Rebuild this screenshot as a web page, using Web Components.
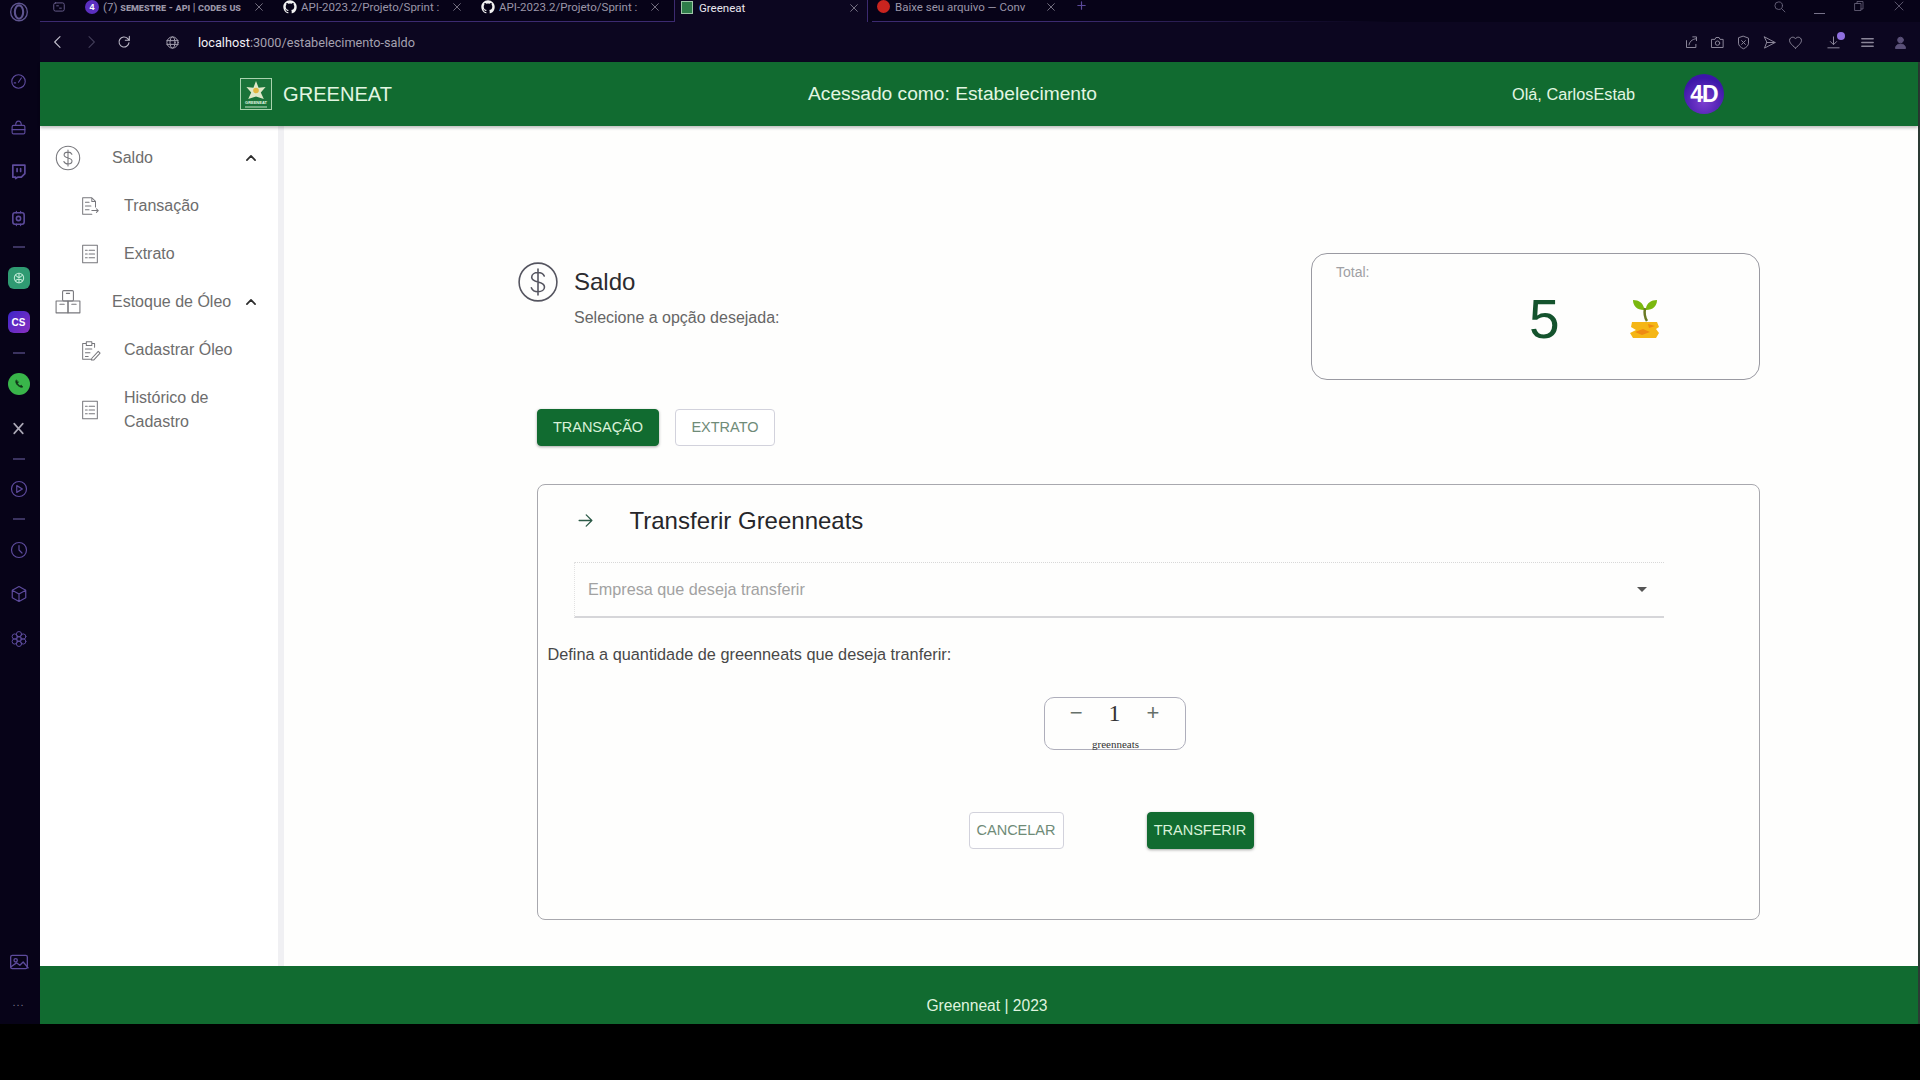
<!DOCTYPE html>
<html lang="pt-BR">
<head>
<meta charset="utf-8">
<title>Greeneat</title>
<style>
  html, body { margin: 0; height: 1080px; overflow: hidden; background: #000; font-family: "Liberation Sans", Arial, sans-serif; }
  browser-frame { height: 1024px; }
</style>
</head>
<body>
<browser-frame>
  <page-main>
    <side-nav slot="nav"></side-nav>
    <saldo-page></saldo-page>
  </page-main>
</browser-frame>

<script>
const GITHUB = 'M12 .5C5.65.5.5 5.65.5 12c0 5.08 3.29 9.39 7.86 10.91.58.11.79-.25.79-.56v-1.96c-3.2.7-3.87-1.54-3.87-1.54-.52-1.33-1.28-1.68-1.28-1.68-1.04-.71.08-.7.08-.7 1.15.08 1.76 1.18 1.76 1.18 1.03 1.76 2.69 1.25 3.35.96.1-.74.4-1.25.73-1.54-2.55-.29-5.24-1.28-5.24-5.69 0-1.26.45-2.28 1.18-3.09-.12-.29-.51-1.46.11-3.05 0 0 .96-.31 3.16 1.18a11 11 0 0 1 5.76 0c2.2-1.49 3.16-1.18 3.16-1.18.62 1.59.24 2.76.12 3.05.74.81 1.18 1.83 1.18 3.09 0 4.42-2.69 5.39-5.25 5.68.41.36.78 1.06.78 2.13v3.16c0 .31.21.67.79.56A11.5 11.5 0 0 0 23.5 12C23.5 5.65 18.35.5 12 .5z';

// all icons sit on a 24x24 box, stroke is currentColor
const ICONS = {
  dollar: '<circle cx="12" cy="12" r="10.8"/><path d="M15.6 8.6c-.6-1.3-2-2-3.6-2-2 0-3.6 1-3.6 2.7 0 3.6 7.3 1.8 7.3 5.5 0 1.7-1.6 2.8-3.7 2.8-1.8 0-3.2-.8-3.8-2.3M12 4.6v14.8"/>',
  chevron: '<path d="M5 15.5l7-7 7 7" stroke-width="3"/>',
  receipt: '<path d="M14 21H4V3h10l4 4v6M14 3v4h4M7 8h4M7 12h6M7 16h4M14 17h7M19 15l2 2-2 2"/>',
  list: '<rect x="4" y="2.5" width="16" height="19"/><path d="M7 8h2M11 8h6M7 12h2M11 12h6M7 16h2M11 16h6"/>',
  boxes: '<rect x="7" y="1.5" width="10" height="9.5" rx="1"/><rect x="1" y="11" width="11" height="11"/><rect x="12" y="11" width="11" height="11"/><path d="M10.5 4h3M4.5 14h4M15.5 14h4"/>',
  clipboard: '<path d="M17 9V5h-3M8 5H4v17h9M8 3h6v4H8zM7 11h7M7 15h5M7 19h3M14 21l7-7.5 2 2-7 7.5h-2.500z"/>',
  arrow: '<path d="M3 12h18M13 4l8 8-8 8"/>',
  back: '<path d="M15 4l-8 8 8 8"/>',
  forward: '<path d="M9 4l8 8-8 8"/>',
  reload: '<path d="M19.500 13a7.500 7.500 0 1 1-2.200-6.300L20 9.500M20 3.500v6h-6"/>',
  globe: '<circle cx="12" cy="12" r="9"/><ellipse cx="12" cy="12" rx="4" ry="9"/><path d="M3 9h18M3 15h18"/>',
  share: '<path d="M4 9v11h15v-5M8 16c.5-5 4.500-9 11-10M14 3h6v6"/>',
  camera: '<path d="M3 7h5l1.500-3h5L16 7h5v13H3z"/><circle cx="12" cy="13" r="3.500"/>',
  shield: '<path d="M12 2l8 3v8c0 4-3.500 7-8 9-4.500-2-8-5-8-9V5zM9 9l6 6M15 9l-6 6"/>',
  send: '<path d="M4 3l17 9-17 9 3.500-9zM7.500 12H21"/>',
  heart: '<path d="M12 21C5 15 2.500 12 2.500 8.500 2.500 5.500 5 3.500 7.500 3.500c2 0 3.500 1 4.500 2.500 1-1.500 2.500-2.500 4.500-2.500 2.500 0 5 2 5 5C21.500 12 19 15 12 21z"/>',
  download: '<path d="M12 3v12M7 10.500l5 5 5-5M3 20.500h18"/>',
  menu: '<path d="M3 6h18M3 12h18M3 18h18" stroke-width="2.600"/>',
  user: '<circle cx="12" cy="8" r="4.500" fill="currentColor"/><path d="M4 21c0-4 3.500-6.500 8-6.500s8 2.500 8 6.500z" fill="currentColor"/>',
  search: '<circle cx="10.500" cy="10.500" r="7"/><path d="M16 16l6 6"/>',
  restore: '<path d="M8 7V3h12v15h-4M4 7h12v14H4z"/>',
  close: '<path d="M4 4l16 16M20 4L4 20"/>',
  plus: '<path d="M12 4v16M4 12h16" stroke-width="2.600"/>',
  workspace: '<rect x="3" y="5" width="18" height="14" rx="3"/><path d="M8 10h3M13 14h3"/>',
  opera: '<ellipse cx="12" cy="12" rx="10" ry="10.500"/><ellipse cx="12" cy="12" rx="5" ry="8" stroke-width="2.500"/>',
  gauge: '<circle cx="12" cy="12" r="9.500"/><path d="M12 13l4-6M6 14h2"/>',
  bag: '<rect x="3" y="9" width="18" height="12" rx="2"/><path d="M8 9c0-3 1.500-6 4-6s4 3 4 6M3 15h18"/>',
  twitch: '<path d="M4 3h17v12l-5 5h-5l-3 2v-2H4z" stroke-width="2.400"/><path d="M10 8v4M15 8v4" stroke-width="2.400"/>',
  square: '<rect x="4" y="4" width="16" height="16" rx="3" stroke-width="2.200"/><circle cx="12" cy="12" r="3" stroke-width="2.200"/><path d="M9 2v2M15 2v2M9 20v2M15 20v2"/>',
  playcircle: '<circle cx="12" cy="12" r="10"/><path d="M9 7.500l7.500 4.500L9 16.500z"/>',
  clock: '<circle cx="12" cy="12" r="10"/><path d="M12 6v6l4 4"/>',
  cube: '<path d="M12 2l9 5v10l-9 5-9-5V7zM3 7l9 5 9-5M12 12v10"/>',
  gear: '<circle cx="12" cy="12" r="3"/><circle cx="12" cy="5.500" r="3.500"/><circle cx="12" cy="18.500" r="3.500"/><circle cx="6.300" cy="8.700" r="3.500"/><circle cx="17.700" cy="8.700" r="3.500"/><circle cx="6.300" cy="15.300" r="3.500"/><circle cx="17.700" cy="15.300" r="3.500"/>',
  image: '<rect x="2" y="4" width="20" height="16" rx="2"/><circle cx="8" cy="10" r="2"/><path d="M2 18l7-5 4 3 4-4 6 7"/>',
  x: '<path d="M4 3l16 18M20 3L4 21" stroke-width="3"/>',
  whatsapp: '<path d="M8 7c-1 2 0 5 2.500 7s5 3 6.500 2l-2-2.500-1.500 1c-1.500-.5-3-2-3.500-3.500l1-1.500z" fill="currentColor"/>',
  knot: '<circle cx="12" cy="12" r="7"/><path d="M7 8l10 8M17 8L7 16M12 5v14"/>',
  github: `<path d="${GITHUB}" fill="currentColor" stroke="none"/>`
};

class UiIcon extends HTMLElement {
  connectedCallback() {
    const size = this.getAttribute('size') || 24;
    const stroke = this.getAttribute('stroke') || 1.6;
    this.attachShadow({ mode: 'open' });
    this.shadowRoot.innerHTML = `
      <style>
        :host { display: inline-flex; flex: none; width: ${size}px; height: ${size}px; }
        svg { width: 100%; height: 100%; display: block; overflow: visible; }
      </style>
      <svg viewBox="0 0 24 24" fill="none" stroke="currentColor" stroke-width="${stroke}"
           stroke-linecap="round" stroke-linejoin="round">${ICONS[this.getAttribute('name')] || ''}</svg>`;
  }
}

class BrowserTab extends HTMLElement {
  connectedCallback() {
    this.attachShadow({ mode: 'open' });
    this.shadowRoot.innerHTML = `
      <style>
        :host {
          display: flex;
          align-items: center;
          box-sizing: border-box;
          width: 198px;
          height: 22px;
          padding: 0 14px 7px 5px;
          color: #9b96a8;
          font: 11.5px Roboto, "Liberation Sans", sans-serif;
          border-bottom: 1px solid #3c2a70;
        }
        :host([active]) {
          width: 194px;
          padding: 0 8px 7px 6px;
          color: #e9e6ef;
          background: #0c0620;
          border-left: 1px solid #3c2a70;
          border-right: 1px solid #3c2a70;
          border-bottom: 0;
        }
        .icon { width: 14px; height: 14px; flex: none; display: flex; margin-right: 4px; }
        .text { flex: 1; min-width: 0; white-space: nowrap; overflow: hidden; }
        ui-icon { color: #a9a5b3; margin-left: 6px; }
      </style>
      <span class="icon"><slot name="icon"></slot></span>
      <span class="text"><slot></slot></span>
      <ui-icon name="close" size="10"></ui-icon>`;
  }
}

class BrowserFrame extends HTMLElement {
  connectedCallback() {
    this.attachShadow({ mode: 'open' });
    this.shadowRoot.innerHTML = `
      <style>
        :host { display: flex; flex-direction: column; background: #070318; color: #5d4b9c; }
        .tabs { display: flex; height: 22px; flex: none; }
        .orb { width: 40px; display: flex; justify-content: center; color: #5f5590; padding-right: 3px; box-sizing: border-box; }
        .orb ui-icon { margin-top: 2px; }
        .space { width: 40px; display: flex; justify-content: center; color: #6a6190; border-bottom: 1px solid #3c2a70; box-sizing: border-box; padding-right: 2px; }
        .fill { flex: 1; display: flex; align-items: flex-start; color: #86809a; box-sizing: border-box; position: relative; }
        .fill::after {
          content: ''; position: absolute; left: 0; bottom: 0; width: 320px; height: 1px;
          background: linear-gradient(90deg, #3c2a70, transparent);
        }
        .plus { margin: 0 0 0 6px; color: #5b4a9a; }
        .win { margin-left: auto; display: flex; align-items: flex-start; gap: 28px; padding-right: 15px; color: #6d6880; }
        .dash { width: 11px; height: 1px; background: #77728a; margin-top: 13px; }
        .body { flex: 1; display: flex; min-height: 0; }
        .rail { width: 40px; flex: none; position: relative; display: flex; flex-direction: column; align-items: center; padding: 51px 3px 0 0; box-sizing: border-box; }
        .rail > * { flex: none; }
        .sep { width: 12px; height: 2px; background: #3b3360; }
        .app { width: 22px; height: 22px; border-radius: 6px; display: flex; align-items: center; justify-content: center; box-sizing: border-box; }
        .gpt { background: #2f9a72; color: #bce8d4; }
        .cs { background: linear-gradient(135deg, #3b27c9, #8b2fc0); color: #fff; font: bold 10px "Liberation Sans", sans-serif; }
        .wa { background: #39b54a; color: #12351a; border-radius: 50%; }
        .right { flex: 1; min-width: 0; display: flex; flex-direction: column; }
        .bar {
          height: 40px; flex: none; background: #0c0620; display: flex; align-items: center; color: #8a8598;
          font: 12.7px Roboto, "Liberation Sans", sans-serif;
        }
        .bar b { font-weight: 400; color: #f3f1f7; }
        .bar span { color: #a5a1b0; margin-left: 18px; }
        .tool { margin-left: auto; display: flex; align-items: center; padding-right: 12px; position: relative; }
        .dot { position: absolute; left: 153px; top: -3px; width: 8px; height: 8px; border-radius: 50%; background: #8f6fe0; }
      </style>
      <div class="tabs">
        <div class="orb"><ui-icon name="opera" size="20"></ui-icon></div>
        <div class="space"><ui-icon name="workspace" size="14"></ui-icon></div>
        <browser-tab>
          <span slot="icon" style="width:14px;height:14px;border-radius:50%;background:#5b2fc0;color:#fff;font:bold 9px/14px 'Liberation Sans',sans-serif;text-align:center">4</span>
          (7) <span style="font-variant:small-caps;font-weight:700;font-size:10.5px">semestre - api | codes us</span>
        </browser-tab>
        <browser-tab><ui-icon slot="icon" name="github" size="14" style="color:#f2f2f2"></ui-icon>API-2023.2/Projeto/Sprint :</browser-tab>
        <browser-tab><ui-icon slot="icon" name="github" size="14" style="color:#f2f2f2"></ui-icon>API-2023.2/Projeto/Sprint :</browser-tab>
        <browser-tab active><span slot="icon" style="width:12px;height:13px;background:#2f7d4a;border:1px solid #9fc7a8;box-sizing:border-box"></span>Greeneat</browser-tab>
        <browser-tab style="margin-left:4px">
          <span slot="icon" style="width:13px;height:13px;border-radius:50%;background:#c9241f;margin-right:-1px"></span>
          Baixe seu arquivo — Conv
        </browser-tab>
        <div class="fill">
          <ui-icon class="plus" name="plus" size="11"></ui-icon>
          <div class="win">
            <ui-icon name="search" size="13"></ui-icon>
            <span class="dash"></span>
            <ui-icon name="restore" size="12"></ui-icon>
            <ui-icon name="close" size="12"></ui-icon>
          </div>
        </div>
      </div>
      <div class="body">
        <div class="rail">
          <ui-icon name="gauge" size="17"></ui-icon>
          <ui-icon name="bag" size="17" style="margin-top:29px"></ui-icon>
          <ui-icon name="twitch" size="17" style="margin-top:27px"></ui-icon>
          <ui-icon name="square" size="17" style="margin-top:30px"></ui-icon>
          <span class="sep" style="margin-top:19px"></span>
          <span class="app gpt" style="margin-top:19px"><ui-icon name="knot" size="16"></ui-icon></span>
          <span class="app cs" style="margin-top:22px">CS</span>
          <span class="sep" style="margin-top:19px"></span>
          <span class="app wa" style="margin-top:19px"><ui-icon name="whatsapp" size="18" stroke="1"></ui-icon></span>
          <ui-icon name="x" size="13" style="margin-top:27px;color:#aaa7b5"></ui-icon>
          <span class="sep" style="margin-top:23px"></span>
          <ui-icon name="playcircle" size="18" style="margin-top:20px"></ui-icon>
          <span class="sep" style="margin-top:20px"></span>
          <ui-icon name="clock" size="18" style="margin-top:21px"></ui-icon>
          <ui-icon name="cube" size="18" style="margin-top:26px"></ui-icon>
          <ui-icon name="gear" size="18" stroke="1.300" style="margin-top:27px"></ui-icon>
          <ui-icon name="image" size="20" style="margin-top:auto"></ui-icon>
          <span style="margin:26px 0 18px;color:#77728a;font-size:11px;line-height:8px;letter-spacing:1px">...</span>
        </div>
        <div class="right">
          <div class="bar">
            <ui-icon name="back" size="16" style="margin-left:10px;color:#c5c2cf"></ui-icon>
            <ui-icon name="forward" size="16" style="margin-left:17px;color:#423d58"></ui-icon>
            <ui-icon name="reload" size="16" style="margin-left:17px;color:#bdbac8"></ui-icon>
            <ui-icon name="globe" size="15" style="margin-left:33px;color:#a5a1b0"></ui-icon>
            <span><b>localhost</b>:3000/estabelecimento-saldo</span>
            <div class="tool">
              <ui-icon name="share" size="15" style="margin-right:11px"></ui-icon>
              <ui-icon name="camera" size="15" style="margin-right:11px"></ui-icon>
              <ui-icon name="shield" size="15" style="margin-right:11px"></ui-icon>
              <ui-icon name="send" size="15" style="margin-right:11px"></ui-icon>
              <ui-icon name="heart" size="15" style="margin-right:23px"></ui-icon>
              <ui-icon name="download" size="15" style="margin-right:19px"></ui-icon>
              <ui-icon name="menu" size="15" style="margin-right:18px"></ui-icon>
              <ui-icon name="user" size="15" style="color:#5a5078"></ui-icon>
              <i class="dot"></i>
            </div>
          </div>
          <slot></slot>
        </div>
      </div>`;
  }
}

class PageMain extends HTMLElement {
  connectedCallback() {
    this.attachShadow({ mode: 'open' });
    this.shadowRoot.innerHTML = `
      <style>
        :host { display: flex; flex-direction: column; flex: 1; min-height: 0; color: #333; height: 962px; }
        .frame { height: 100%; display: flex; flex-direction: column; border-right: 2px solid #2c3a34; }
        .middle { flex: 1; display: flex; min-height: 0; background: #fefefd; }
      </style>
      <div class="frame">
        <app-header></app-header>
        <div class="middle">
          <slot name="nav"></slot>
          <slot></slot>
        </div>
        <app-footer></app-footer>
      </div>`;
  }
}

class AppHeader extends HTMLElement {
  connectedCallback() {
    this.attachShadow({ mode: 'open' });
    this.shadowRoot.innerHTML = `
      <style>
        :host {
          display: grid;
          grid-template-columns: 768px 704px 172px 40px;
          align-items: center;
          flex: none;
          height: 64px;
          background: #116b30;
          color: #e2f6e2;
          box-shadow: 0 2px 3px rgba(0,0,0,.25);
          position: relative;
        }
        .brand { display: flex; align-items: center; padding-left: 200px; gap: 11px; font-size: 20.1px; }
        svg { width: 32px; height: 32px; display: block; }
        .who { font-size: 19.2px; }
        .user { font-size: 16.3px; }
        .avatar {
          width: 40px; height: 40px; border-radius: 50%;
          background: radial-gradient(circle at 50% 70%, #7d3fd0, #3c16a8 70%);
          color: #fff; font: bold 23px/40px "Liberation Sans", sans-serif; text-align: center;
          letter-spacing: -1px;
        }
      </style>
      <div class="brand">
        <svg viewBox="0 0 32 32">
          <rect x=".5" y=".5" width="31" height="31" fill="#1a7339" stroke="#a9d3ae"/>
          <path d="M16 3l2.600 6.800 7-.8-4.800 5.500 3 6.500-7.800-2.400-7.800 2.400 3-6.500L6.400 9l7 .8z" fill="#dfe8c8"/>
          <circle cx="16" cy="12.500" r="2.800" fill="#e2b73f"/>
          <text x="16" y="26" font-size="4" font-weight="700" text-anchor="middle" fill="#e2f6e2" font-family="Liberation Sans, sans-serif">GREENEAT</text>
          <path d="M5 29h22" stroke="#c5e3c8" stroke-width="1"/>
        </svg>
        <span>GREENEAT</span>
      </div>
      <div class="who">Acessado como: Estabelecimento</div>
      <div class="user">Olá, CarlosEstab</div>
      <div class="avatar">4D</div>`;
  }
}

class NavItem extends HTMLElement {
  connectedCallback() {
    const sub = this.hasAttribute('sub');
    this.attachShadow({ mode: 'open' });
    this.shadowRoot.innerHTML = `
      <style>
        :host {
          display: flex;
          align-items: center;
          box-sizing: border-box;
          min-height: 48px;
          padding-left: ${sub ? 39 : 15}px;
          color: #6d6d6d;
          font-size: 16px;
          line-height: 24px;
        }
        .ic { width: ${sub ? 45 : 57}px; flex: none; display: flex; color: #77777c; }
        .label { flex: 1; }
        .chev { color: #2d2d2d; margin-right: 20px; margin-left: -6px; }
      </style>
      <span class="ic"><ui-icon name="${this.getAttribute('icon')}" size="${sub ? 22 : 26}" stroke="${sub ? 1.100 : 1}"></ui-icon></span>
      <span class="label"><slot></slot></span>
      ${sub ? '' : '<ui-icon class="chev" name="chevron" size="14"></ui-icon>'}`;
  }
}

class SideNav extends HTMLElement {
  connectedCallback() {
    this.attachShadow({ mode: 'open' });
    this.shadowRoot.innerHTML = `
      <style>
        :host {
          display: block;
          flex: none;
          box-sizing: content-box;
          width: 238px;
          padding-top: 8px;
          background: #fff;
          border-right: 6px solid #f0f0f3;
        }
      </style>
      <nav-item icon="dollar">Saldo</nav-item>
      <nav-item sub icon="receipt">Transação</nav-item>
      <nav-item sub icon="list">Extrato</nav-item>
      <nav-item icon="boxes">Estoque de Óleo</nav-item>
      <nav-item sub icon="clipboard">Cadastrar Óleo</nav-item>
      <nav-item sub icon="list" style="min-height:72px">Histórico de<br>Cadastro</nav-item>`;
  }
}

class AppButton extends HTMLElement {
  connectedCallback() {
    this.attachShadow({ mode: 'open' });
    this.shadowRoot.innerHTML = `
      <style>
        :host {
          display: inline-flex;
          align-items: center;
          justify-content: center;
          box-sizing: border-box;
          height: 37px;
          padding-bottom: 1px;
          border-radius: 4px;
          font-size: 14.5px;
          color: #6f8b78;
          border: 1px solid #d2d2dc;
          background: #fff;
        }
        :host([primary]) {
          color: #d9f2d9;
          background: #116b30;
          border-color: #116b30;
          box-shadow: 0 1px 3px rgba(0,0,0,.35);
        }
      </style>
      <slot></slot>`;
  }
}

class TotalCard extends HTMLElement {
  connectedCallback() {
    this.attachShadow({ mode: 'open' });
    this.shadowRoot.innerHTML = `
      <style>
        :host {
          display: block;
          box-sizing: border-box;
          width: 449px;
          height: 127px;
          border: 1.500px solid #9a9aa2;
          border-radius: 16px;
          padding: 9.500px 0 0 24px;
        }
        .label { color: #a0a0a4; font-size: 14px; line-height: 16px; }
        .row { display: flex; align-items: center; margin: 8px 0 0 193px; }
        .num { font-size: 55px; line-height: 62px; color: #14532d; }
        svg { width: 32px; height: 40px; margin-left: 69px; display: block; }
      </style>
      <div class="label">Total:</div>
      <div class="row">
        <span class="num">${this.getAttribute('value')}</span>
        <svg viewBox="0 0 32 40">
          <path d="M15 9c-1-5-5-8-11-8 0 6 4 10 11 10zM17 9c1-5 5-8 11-8 0 6-4 10-11 10z" fill="#7ab80e"/>
          <path d="M16 9c-1 6 0 10 2 13" stroke="#6b7a24" stroke-width="2.500" fill="none"/>
          <path d="M3 23h25l2 5-3 2 3 4-3 5H4l-3-5 6-3-5-3z" fill="#f5b616"/>
          <path d="M6 33l8-3 7 3-8 3zM19 25l7 2-6 2z" fill="#ef8a12"/>
        </svg>
      </div>`;
  }
}

class QtyStepper extends HTMLElement {
  connectedCallback() {
    this.attachShadow({ mode: 'open' });
    this.shadowRoot.innerHTML = `
      <style>
        :host {
          display: block;
          box-sizing: border-box;
          width: 142px;
          height: 53px;
          border: 1.500px solid #aeaebb;
          border-radius: 10px;
          font-family: "Liberation Serif", serif;
          text-align: center;
        }
        .row { display: grid; grid-template-columns: 63px 14px 63px; align-items: center; height: 31px; color: #555; }
        .row span:first-child { text-align: right; padding-right: 25px; }
        .row span:last-child { text-align: left; padding-left: 25px; }
        .row span { font: 22px/30px "Liberation Sans", sans-serif; color: #66706a; }
        .row .val { font: 24px/30px "Liberation Serif", serif; color: #333; }
        .unit { font-size: 11px; line-height: 11px; margin-top: 10px; padding-left: 2px; color: #333; }
      </style>
      <div class="row"><span>−</span><span class="val">1</span><span>+</span></div>
      <div class="unit">greenneats</div>`;
  }
}

class SelectBox extends HTMLElement {
  connectedCallback() {
    this.attachShadow({ mode: 'open' });
    this.shadowRoot.innerHTML = `
      <style>
        :host {
          display: flex;
          align-items: center;
          box-sizing: border-box;
          width: 1090px;
          height: 56px;
          padding: 0 17px 0 13.500px;
          color: #a2a2a2;
          font-size: 16.2px;
          border-top: 1px dotted #d8d8d8;
          border-left: 1px dotted #e2e2e2;
          border-bottom: 2px solid #d6d6d9;
        }
        .text { flex: 1; }
        .caret { width: 0; height: 0; border: 5px solid transparent; border-top: 5px solid #555; border-bottom: 0; }
      </style>
      <span class="text"><slot></slot></span>
      <span class="caret"></span>`;
  }
}

class TransferCard extends HTMLElement {
  connectedCallback() {
    this.attachShadow({ mode: 'open' });
    this.shadowRoot.innerHTML = `
      <style>
        :host {
          display: block;
          box-sizing: border-box;
          height: 436px;
          border: 1.500px solid #a8a8ae;
          border-radius: 8px;
          padding: 17.500px 8.500px 0;
        }
        .head { display: flex; align-items: center; height: 36px; padding-left: 30px; font-size: 24px; color: #26262a; }
        ui-icon { color: #2c5a47; margin-right: 36px; }
        select-box { margin: 23px 0 0 27px; }
        .label { margin: 26px 0 0 1px; font-size: 16.3px; line-height: 20px; color: #484848; }
        qty-stepper { margin: 33px 0 0 497px; }
        .actions { display: flex; gap: 83px; margin: 62px 0 0 422px; }
        .cancel { width: 95px; }
        .go { width: 107px; }
      </style>
      <div class="head"><ui-icon name="arrow" size="17" stroke="1.800"></ui-icon>Transferir Greenneats</div>
      <select-box>Empresa que deseja transferir</select-box>
      <div class="label">Defina a quantidade de greenneats que deseja tranferir:</div>
      <qty-stepper></qty-stepper>
      <div class="actions">
        <app-button class="cancel">CANCELAR</app-button>
        <app-button class="go" primary>TRANSFERIR</app-button>
      </div>`;
  }
}

class SaldoPage extends HTMLElement {
  connectedCallback() {
    this.attachShadow({ mode: 'open' });
    this.shadowRoot.innerHTML = `
      <style>
        :host { display: block; flex: 1; min-width: 0; box-sizing: border-box; padding: 127px 158px 0 253px; }
        .top { display: flex; justify-content: space-between; align-items: flex-start; }
        .title { display: flex; gap: 15px; margin: 8px 0 0 -20px; color: #555560; }
        .title h1 { margin: 6px 0 0; font-weight: 400; font-size: 24px; line-height: 30px; color: #2b2b2f; }
        .title p { margin: 11px 0 0; font-size: 16px; line-height: 20px; color: #666; }
        .tabs { display: flex; gap: 16px; margin: 29px 0 38px; }
        .t1 { width: 122px; }
        .t2 { width: 100px; }
      </style>
      <div class="top">
        <div class="title">
          <ui-icon name="dollar" size="42" stroke=".9"></ui-icon>
          <div>
            <h1>Saldo</h1>
            <p>Selecione a opção desejada:</p>
          </div>
        </div>
        <total-card value="5"></total-card>
      </div>
      <div class="tabs">
        <app-button class="t1" primary>TRANSAÇÃO</app-button>
        <app-button class="t2">EXTRATO</app-button>
      </div>
      <transfer-card></transfer-card>`;
  }
}

class AppFooter extends HTMLElement {
  connectedCallback() {
    this.attachShadow({ mode: 'open' });
    this.shadowRoot.innerHTML = `
      <style>
        :host {
          display: block;
          flex: none;
          height: 58px;
          line-height: 80px;
          overflow: hidden;
          background: #116b30;
          color: #dff3df;
          font-size: 15.6px;
          text-align: center;
          padding-left: 16px;
        }
      </style>
      <slot>Greenneat | 2023</slot>`;
  }
}

customElements.define('ui-icon', UiIcon);
customElements.define('browser-tab', BrowserTab);
customElements.define('browser-frame', BrowserFrame);
customElements.define('page-main', PageMain);
customElements.define('app-header', AppHeader);
customElements.define('nav-item', NavItem);
customElements.define('side-nav', SideNav);
customElements.define('app-button', AppButton);
customElements.define('total-card', TotalCard);
customElements.define('qty-stepper', QtyStepper);
customElements.define('select-box', SelectBox);
customElements.define('transfer-card', TransferCard);
customElements.define('saldo-page', SaldoPage);
customElements.define('app-footer', AppFooter);
</script>
</body>
</html>
